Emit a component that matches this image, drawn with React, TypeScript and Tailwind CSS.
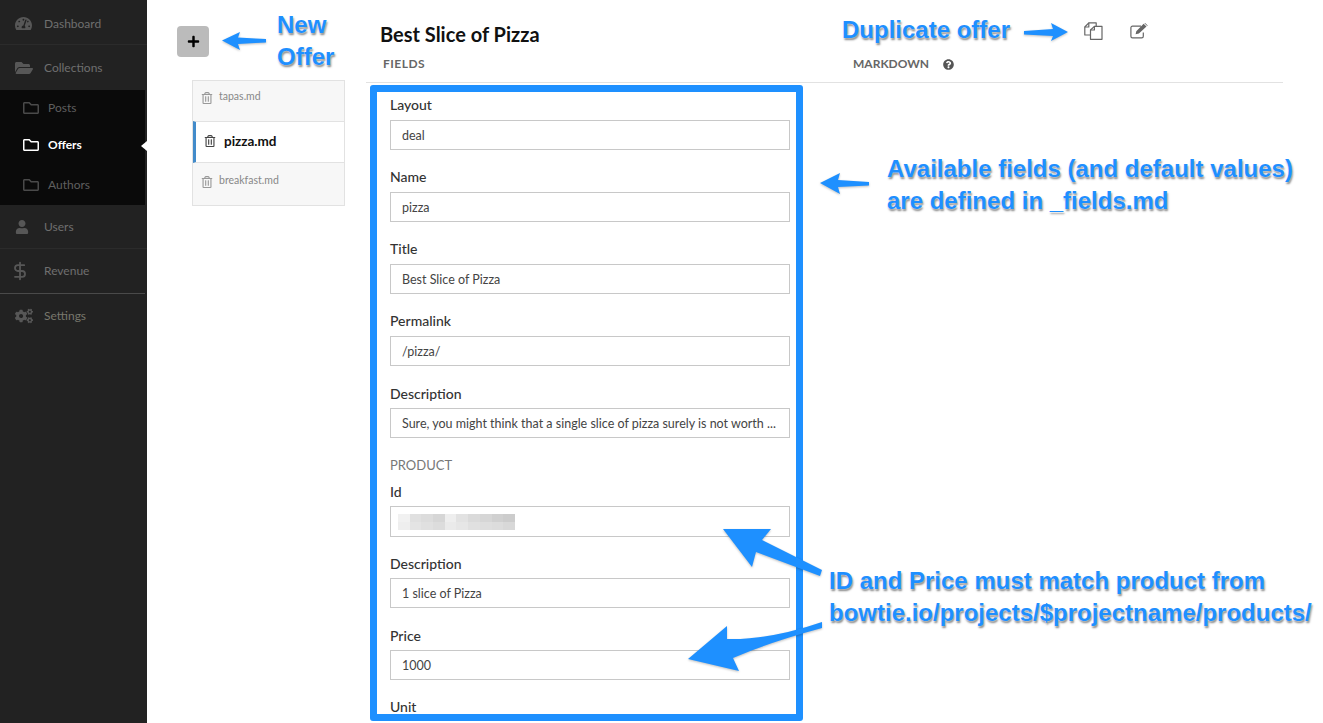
import React from "react";
import { DollarSign } from "lucide-react";
import {
  FaTachometerAlt,
  FaFolderOpen,
  FaRegFolder,
  FaUser,
  FaCogs,
  FaRegTrashAlt,
  FaQuestionCircle,
  FaPlus,
} from "react-icons/fa";

const font = "font-['Lato','Noto_Sans',sans-serif]";

function NavRow({ icon, label, cls }: { icon: React.ReactNode; label: string; cls: string }) {
  return (
    <div className={`flex items-center text-[12px] text-[#6f6f6f] ${cls}`}>
      <span className="w-[44px] pl-[15px] flex items-center text-[#575757]">{icon}</span>
      <span>{label}</span>
    </div>
  );
}

function SubRow({ label, cls, active }: { label: string; cls: string; active?: boolean }) {
  return (
    <div className={`flex items-center text-[12px] ${active ? "text-white font-bold" : "text-[#5f5f5f]"} ${cls}`}>
      <span className={`w-[48px] pl-[23px] flex items-center ${active ? "text-white" : "text-[#4a4a4a]"}`}>
        <FaRegFolder size={16} />
      </span>
      <span>{label}</span>
    </div>
  );
}

function Sidebar() {
  return (
    <aside className="relative w-[147px] h-full shrink-0 bg-[#222222]">
      <NavRow icon={<FaTachometerAlt size={17} />} label="Dashboard" cls="h-[45px] pt-[3px] border-b border-[#2b2b2b] box-border" />
      <NavRow icon={<FaFolderOpen size={18} />} label="Collections" cls="h-[45px]" />
      <div className="w-[145px] h-[115px] bg-[#0a0a0a]">
        <SubRow label="Posts" cls="h-[36px]" />
        <SubRow label="Offers" cls="h-[38px]" active />
        <SubRow label="Authors" cls="h-[41px]" />
      </div>
      <NavRow icon={<FaUser size={14} />} label="Users" cls="h-[44px] border-b border-[#2b2b2b]" />
      <NavRow
        icon={<DollarSign size={20} strokeWidth={2.2} className="-ml-[5px]" />}
        label="Revenue"
        cls="h-[45px] w-[145px] border-b border-[#4a4a4a]"
      />
      <NavRow icon={<FaCogs size={18} />} label="Settings" cls="h-[44px] text-[#77776c]" />
      <div className="absolute left-[141px] top-[141px] w-0 h-0 border-y-[5px] border-y-transparent border-r-[6px] border-r-white" />
    </aside>
  );
}

function ListRow({ name, active, cls }: { name: string; active?: boolean; cls?: string }) {
  if (active) {
    return (
      <div className="h-[42px] pb-[2px] bg-white border-y border-[#e2e2e2] border-l-[3px] border-l-[#428bca] flex items-center pl-[8px] text-[13.5px] font-bold text-[#111]">
        <FaRegTrashAlt size={12} className="text-[#444] mr-[8px]" />
        <span>{name}</span>
      </div>
    );
  }
  return (
    <div className={`flex items-start pl-[8px] text-[10.5px] text-[#888] ${cls}`}>
      <FaRegTrashAlt size={12} className="text-[#999] mr-[6px] mt-[3px]" />
      <span>{name}</span>
    </div>
  );
}

function FileColumn() {
  return (
    <div className="w-[219px] shrink-0 pt-[26px]">
      <div className="ml-[30px] w-[32px] h-[31px] rounded-[4px] bg-[#bbbbbb] flex items-center justify-center text-black">
        <FaPlus size={13} />
      </div>
      <div className="ml-[45px] mt-[23px] w-[153px] border border-[#e2e2e2] bg-[#f7f7f7]">
        <ListRow name="tapas.md" cls="h-[40px] pt-[8px]" />
        <ListRow name="pizza.md" active />
        <ListRow name="breakfast.md" cls="h-[42px] pt-[10px]" />
      </div>
    </div>
  );
}

function Field({
  label,
  value,
  low,
  tall,
  children,
}: {
  label: string;
  value?: string;
  low?: boolean;
  tall?: boolean;
  children?: React.ReactNode;
}) {
  return (
    <div className={tall ? "mb-[16px]" : "mb-[17px]"}>
      <div className={`h-[20px] mb-[5px] text-[14px] font-medium text-[#333] ${low ? "leading-[22px]" : "leading-[20px]"}`}>{label}</div>
      <div
        className={`relative w-[400px] border border-[#c8c8c8] flex items-center pl-[11px] pt-[3px] text-[12.5px] text-[#444] overflow-hidden whitespace-nowrap ${
          tall ? "h-[31px]" : "h-[30px]"
        }`}
      >
        {value}
        {children}
      </div>
    </div>
  );
}

const blur = [
  ["#f1f1f1", "#e0e0e0", "#dcdcdc", "#d6d6d6", "#eeeeee", "#e2e2e2", "#dadada", "#d6d6d6", "#d0d0d0", "#cccccc"],
  ["#eeeeee", "#e4e4e4", "#e0e0e0", "#dcdcdc", "#eaeaea", "#e6e6e6", "#e0e0e0", "#dedede", "#dcdcdc", "#d8d8d8"],
];

function BlurredId() {
  return (
    <div className="absolute left-[7px] top-[7px] flex flex-col">
      {blur.map((row, i) => (
        <div key={i} className="flex">
          {row.map((c, j) => (
            <div key={j} className="w-[11.7px] h-[8px]" style={{ backgroundColor: c }} />
          ))}
        </div>
      ))}
    </div>
  );
}

function FormBox() {
  return (
    <div className="ml-[4px] mt-[2px] w-[433px] h-[636px] border-[7px] border-[#1e90ff] rounded-[3px] pl-[13px] pt-[3px] overflow-hidden">
      <Field label="Layout" value="deal" />
      <Field label="Name" value="pizza" />
      <Field label="Title" value="Best Slice of Pizza" />
      <Field label="Permalink" value="/pizza/" />
      <Field label="Description" low value="Sure, you might think that a single slice of pizza surely is not worth ..." />
      <div className="h-[20px] mb-[6px] leading-[20px] text-[13px] text-[#777]">PRODUCT</div>
      <Field label="Id" low tall>
        <BlurredId />
      </Field>
      <Field label="Description" low value="1 slice of Pizza" />
      <Field label="Price" low value="1000" />
      <div className="h-[20px] leading-[20px] text-[14px] font-medium text-[#333]">Unit</div>
    </div>
  );
}

function DuplicateIcon() {
  return (
    <svg width="19" height="18" viewBox="0 0 19 18" fill="none" stroke="#666" strokeWidth="1.2" strokeLinejoin="round">
      <path d="M6.5 13H.8V5L4.8.8h7.4v3.6" />
      <path d="M4.8.8V5H.8" />
      <path d="M6.5 17.3V8L10.4 4.4h7.6v12.9z" fill="#fff" />
      <path d="M10.4 4.4V8H6.5" />
    </svg>
  );
}

function EditIcon() {
  return (
    <svg width="18" height="16" viewBox="0 0 18 16" fill="none">
      <path d="M11 3.2H2.5A1.6 1.6 0 0 0 .9 4.8v8.5a1.6 1.6 0 0 0 1.6 1.6h9.2a1.6 1.6 0 0 0 1.6-1.6V9.5" stroke="#666" strokeWidth="1.2" />
      <path d="M5.6 11.2l.7-3L13.6.8l2.9 2.6-7.6 7.2zM14.4.2l.7-.2 2.6 2.4-.5.6z" fill="#666" />
    </svg>
  );
}

function Main() {
  return (
    <main className="w-[917px] shrink-0 pt-[22px]">
      <div className="flex items-center h-[24px] pl-[14px] pr-[135px]">
        <h1 className="text-[20px] leading-[24px] font-bold text-[#111]">Best Slice of Pizza</h1>
        <div className="ml-auto -mt-[7px] flex items-center gap-[27px]">
          <DuplicateIcon />
          <EditIcon />
        </div>
      </div>
      <div className="mt-[9px] h-[28px] pt-[1px] border-b border-[#e2e2e2] flex text-[12px] font-bold text-[#666] leading-[16px]">
        <span className="pl-[17px] w-[487px] tracking-[0.5px]">FIELDS</span>
        <span>MARKDOWN</span>
        <FaQuestionCircle size={11} className="ml-[14px] mt-[3px] text-[#555]" />
      </div>
      <FormBox />
    </main>
  );
}

const note =
  "absolute font-['Liberation_Sans',Arial,sans-serif] font-bold text-[24px] leading-[32px] whitespace-nowrap text-[#1e8fff] [text-shadow:0_0_2px_#ffffff,1px_2px_2px_rgba(0,0,0,0.5)]";

function Arrows() {
  return (
    <svg
      className="absolute left-0 top-0 pointer-events-none [filter:drop-shadow(0_1px_1px_rgba(0,0,0,0.25))]"
      width="1323"
      height="723"
      viewBox="0 0 1323 723"
      fill="#1e90ff"
    >
      <path d="M222 40.5L240 32L238 37.5L266 39L266 42.5L238 44L240 50Z" />
      <path d="M1068 32L1051 23L1053 29L1024 31L1024 34.5L1053 36L1051 41Z" />
      <path d="M820 183L840 173L838 180L869 182L869 185.5L838 187L840 194Z" />
      <path d="M723 529L771 529L762 540L822 570L820 576L756 552L752 567Z" />
      <path d="M688 659L727 626L727 639Q770 640 822 622L822 628Q770 642 733 658L739 671Z" />
    </svg>
  );
}

export default function App() {
  return (
    <div className={`relative flex w-[1323px] h-[723px] overflow-hidden bg-white ${font}`}>
      <Sidebar />
      <FileColumn />
      <Main />
      <Arrows />
      <div className={`${note} left-[277px] top-[9px]`}>New</div>
      <div className={`${note} left-[277px] top-[41px]`}>Offer</div>
      <div className={`${note} left-[842px] top-[14px]`}>Duplicate offer</div>
      <div className={`${note} left-[887px] top-[153px]`}>Available fields (and default values)</div>
      <div className={`${note} left-[887px] top-[185px]`}>are defined in _fields.md</div>
      <div className={`${note} left-[829px] top-[565px]`}>ID and Price must match product from</div>
      <div className={`${note} left-[829px] top-[597px]`}>bowtie.io/projects/$projectname/products/</div>
    </div>
  );
}
